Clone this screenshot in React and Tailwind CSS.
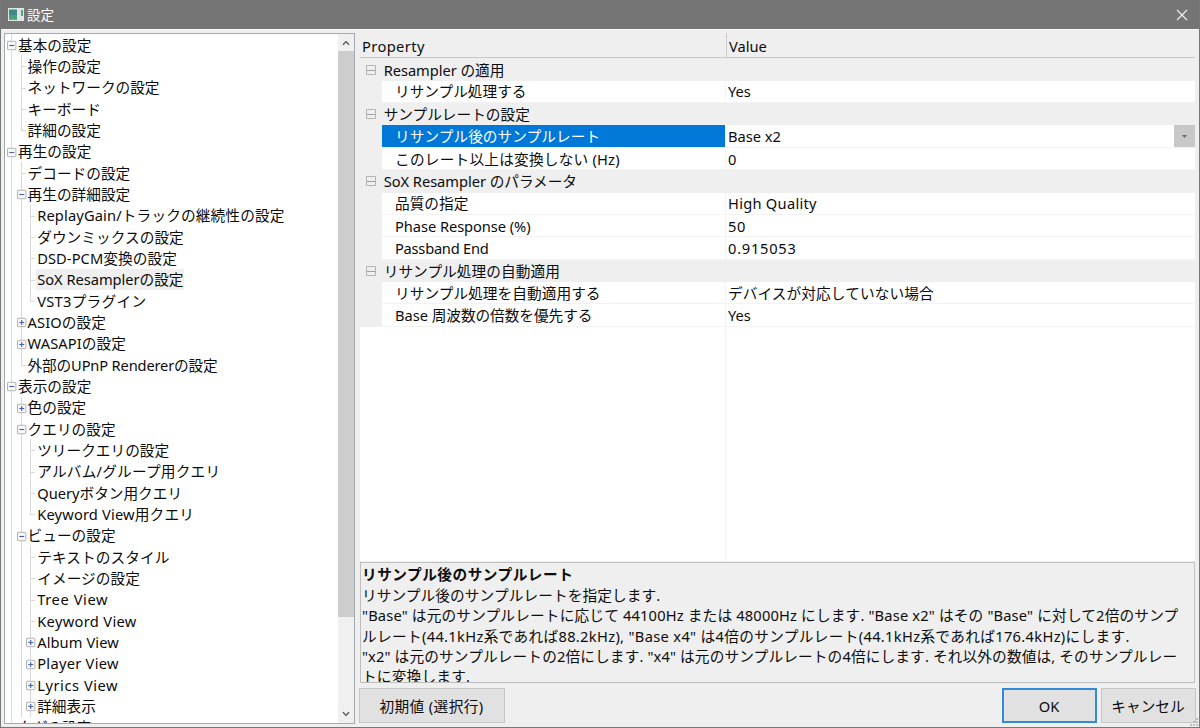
import React from "react";

// state is "open" or "closed" for rows with children, nothing for plain rows
const treeRows = [
  { depth: 0, label: "基本の設定", state: "open" },
  { depth: 1, label: "操作の設定" },
  { depth: 1, label: "ネットワークの設定" },
  { depth: 1, label: "キーボード" },
  { depth: 1, label: "詳細の設定", last: true },
  { depth: 0, label: "再生の設定", state: "open" },
  { depth: 1, label: "デコードの設定" },
  { depth: 1, label: "再生の詳細設定", state: "open" },
  { depth: 2, label: "ReplayGain/トラックの継続性の設定", spacing: "tracking-[0.14px]" },
  { depth: 2, label: "ダウンミックスの設定", spacing: "tracking-[0.05px]" },
  { depth: 2, label: "DSD-PCM変換の設定", spacing: "tracking-[0.08px]" },
  { depth: 2, label: "SoX Resamplerの設定", selected: true, spacing: "tracking-[-0.03px]" },
  { depth: 2, label: "VST3プラグイン", last: true, spacing: "tracking-[0.28px]" },
  { depth: 1, label: "ASIOの設定", state: "closed", spacing: "tracking-[0.08px]" },
  { depth: 1, label: "WASAPIの設定", state: "closed", spacing: "tracking-[0.08px]" },
  { depth: 1, label: "外部のUPnP Rendererの設定", last: true, spacing: "tracking-[-0.16px]" },
  { depth: 0, label: "表示の設定", state: "open" },
  { depth: 1, label: "色の設定", state: "closed" },
  { depth: 1, label: "クエリの設定", state: "open" },
  { depth: 2, label: "ツリークエリの設定" },
  { depth: 2, label: "アルバム/グループ用クエリ", spacing: "tracking-[0.22px]" },
  { depth: 2, label: "Queryボタン用クエリ" },
  { depth: 2, label: "Keyword View用クエリ", last: true, spacing: "tracking-[0.17px]" },
  { depth: 1, label: "ビューの設定", state: "open" },
  { depth: 2, label: "テキストのスタイル", spacing: "tracking-[0.08px]" },
  { depth: 2, label: "イメージの設定", spacing: "tracking-[0.08px]" },
  { depth: 2, label: "Tree View", spacing: "tracking-[0.6px]" },
  { depth: 2, label: "Keyword View", spacing: "tracking-[0.33px]" },
  { depth: 2, label: "Album View", state: "closed", spacing: "tracking-[0.08px]" },
  { depth: 2, label: "Player View", state: "closed", spacing: "tracking-[0.28px]" },
  { depth: 2, label: "Lyrics View", state: "closed", spacing: "tracking-[0.55px]" },
  { depth: 2, label: "詳細表示", state: "closed" },
  { depth: 0, label: "タグの設定", state: "open" },
];

const properties = [
  { group: "Resampler の適用", spacing: "tracking-[-0.05px]" },
  { name: "リサンプル処理する", value: "Yes" },
  { group: "サンプルレートの設定" },
  { name: "リサンプル後のサンプルレート", value: "Base x2", selected: true, spacing: "tracking-[0.06px]" },
  { name: "このレート以上は変換しない (Hz)", value: "0", spacing: "tracking-[0.22px]" },
  { group: "SoX Resampler のパラメータ", spacing: "tracking-[-0.04px]" },
  { name: "品質の指定", value: "High Quality", valueSpacing: "tracking-[0.27px]" },
  { name: "Phase Response (%)", value: "50", spacing: "tracking-[-0.06px]", valueSpacing: "tracking-[0.7px]" },
  { name: "Passband End", value: "0.915053", spacing: "tracking-[-0.25px]", valueSpacing: "tracking-[0.75px]" },
  { group: "リサンプル処理の自動適用", spacing: "tracking-[0.06px]" },
  { name: "リサンプル処理を自動適用する", value: "デバイスが対応していない場合", spacing: "tracking-[0.06px]", valueSpacing: "tracking-[0.1px]" },
  { name: "Base 周波数の倍数を優先する", value: "Yes", spacing: "tracking-[-0.04px]" },
];

const Line = () => (
  <svg width="9.6" height="21.34" className="shrink-0">
    <path d="M4.5 0V22" stroke="#d9d9d9" />
  </svg>
);

const Branch = ({ row }) => {
  const { state, last, depth } = row;
  return (
    <svg width="10" height="21.34" className="shrink-0">
      {depth === 0 ? (
        <path d="M4.5 0V22" stroke="#dedede" />
      ) : (
        <path d={last ? "M4.5 0V11.5" : "M4.5 0V22"} stroke="#d9d9d9" />
      )}
      {!state && <path d="M4.5 11.5H9" stroke="#d9d9d9" />}
      {state && (
        <>
          <rect x="0.5" y="7.3" width="8.4" height="8.4" rx="0.5" fill="#f8f8f8" stroke="#b4b4b4" />
          <path d="M2.3 11.5H7.2" stroke="#4a62ad" strokeWidth="1.1" />
          {state === "closed" && <path d="M4.7 9V14" stroke="#4a62ad" strokeWidth="1.1" />}
        </>
      )}
    </svg>
  );
};

const TreeRow = ({ row }) => (
  <div className="flex h-[21.34px] shrink-0 items-center">
    {row.depth > 0 && <Line />}
    {row.depth > 1 && <Line />}
    <Branch row={row} />
    <span
      className={`flex h-[21px] items-center whitespace-nowrap pr-[1px] pl-[1px] ${
        row.selected ? "bg-[#efefef]" : ""
      } ${row.spacing || ""}`}
    >
      {row.label}
    </span>
  </div>
);

const Tree = () => (
  <div className="flex h-[691px] w-[351px] border border-[#a5a9b0] bg-white">
    <div className="flex flex-1 flex-col overflow-hidden pl-[2px]">
      {treeRows.map((row) => (
        <TreeRow key={row.label} row={row} />
      ))}
    </div>
    <div className="flex w-4 shrink-0 flex-col bg-[#f0f0f0]">
      <div className="flex h-[17px] items-center justify-center">
        <svg width="8" height="6" fill="none">
          <path d="M1 4.8L4 1.6L7 4.8" stroke="#505050" strokeWidth="1.3" />
        </svg>
      </div>
      <div className="h-[566px] bg-[#cdcdcd]" />
      <div className="mt-auto flex h-[18px] items-center justify-center">
        <svg width="8" height="6" fill="none">
          <path d="M1 1.2L4 4.4L7 1.2" stroke="#505050" strokeWidth="1.3" />
        </svg>
      </div>
    </div>
  </div>
);

const PropertyRow = ({ item }) => {
  if (item.group) {
    return (
      <div className="flex h-[22.36px] items-center bg-[#efefef]">
        <svg width="23.7" height="12" fill="none" className="shrink-0">
          <path d="M6.5 1.5H15.5V10.5H6.5Z" stroke="#b4b4b4" />
          <path d="M7 6.5H15" stroke="#a0a0a0" />
        </svg>
        <span className={item.spacing}>{item.group}</span>
      </div>
    );
  }
  return (
    <div className="flex h-[22.36px]">
      <div className="w-[22px] shrink-0 bg-[#efefef]" />
      <div
        className={`flex w-[344px] shrink-0 items-center border-r border-b border-[#f3f3f3] pl-[13px] ${
          item.selected ? "bg-[#0078d7] text-white" : "bg-white"
        } ${item.spacing || ""}`}
      >
        {item.name}
      </div>
      <div className="flex flex-1 items-center border-b border-[#f3f3f3] bg-white pl-[2px]">
        <span className={item.valueSpacing}>{item.value}</span>
        {item.selected && (
          <div className="ml-auto flex h-full w-[21px] items-center justify-center bg-[#c8c8c8]">
            <svg width="5" height="3">
              <path d="M0 0H5L2.5 3Z" fill="#6b6b6b" />
            </svg>
          </div>
        )}
      </div>
    </div>
  );
};

const PropertyGrid = () => (
  <div className="flex h-[528px] flex-col bg-white">
    <div className="flex h-[25.4px] shrink-0 border-b border-[#c9c9c9] bg-[#efefef]">
      <div className="flex w-[367px] items-center border-r border-[#c9c9c9] pt-[2px] pl-[2px] tracking-[0.4px]">
        Property
      </div>
      <div className="flex items-center pt-[2px] pl-[2px]">Value</div>
    </div>
    {properties.map((item) => (
      <PropertyRow key={item.group || item.name} item={item} />
    ))}
    <div className="w-[366px] flex-1 border-r border-[#f3f3f3]" />
  </div>
);

const Description = () => (
  <div className="mt-[1px] h-[121px] overflow-hidden border border-[#bfbfbf] pt-[1px] pl-[1px] leading-[20.5px] whitespace-nowrap">
    <p className="font-bold tracking-[0.5px]">リサンプル後のサンプルレート</p>
    <p className="tracking-[0.1px]">リサンプル後のサンプルレートを指定します.</p>
    <p className="tracking-[0.17px]">
      "Base" は元のサンプルレートに応じて 44100Hz または 48000Hz にします. "Base x2" はその "Base" に対して2倍のサンプ
    </p>
    <p className="tracking-[0.33px]">
      ルレート(44.1kHz系であれば88.2kHz), "Base x4" は4倍のサンプルレート(44.1kHz系であれば176.4kHz)にします.
    </p>
    <p className="tracking-[0.14px]">
      "x2" は元のサンプルレートの2倍にします. "x4" は元のサンプルレートの4倍にします. それ以外の数値は, そのサンプルレー
    </p>
    <p className="-mt-[1px] tracking-[0.2px]">トに変換します.</p>
  </div>
);

const ResizeGrip = () => (
  <svg width="9" height="9" fill="#bdbdbd" className="absolute right-0 bottom-0">
    <path d="M6 0H8V2H6ZM6 3H8V5H6ZM6 6H8V8H6ZM3 3H5V5H3ZM3 6H5V8H3ZM0 6H2V8H0Z" />
  </svg>
);

const App = () => {
  return (
    <div className="relative flex h-[728px] w-[1200px] flex-col overflow-hidden border border-t-0 border-[#777777] bg-[#efefef] font-['Noto_Sans','Noto_Sans_CJK_JP',sans-serif] text-[14.67px] leading-[20px] text-[#0c0c0c]">
      <header className="flex h-[29px] shrink-0 items-center bg-[#757575] pl-[7px] text-white">
        <svg width="16" height="13" className="mr-[3px]">
          <rect width="16" height="13" fill="#dfe6e6" />
          <rect x="1" y="1.5" width="8" height="10" fill="#3f8a84" />
          <rect x="1" y="7" width="8" height="4.5" fill="#4f9f7c" />
          <rect x="13" y="2" width="2" height="6" fill="#58a080" />
        </svg>
        <span className="text-[13.5px]">設定</span>
        <svg width="12" height="12" className="mr-[11px] ml-auto" fill="none">
          <path d="M1 1L11 11M11 1L1 11" stroke="#f2f2f2" strokeWidth="1.1" />
        </svg>
      </header>
      <main className="flex flex-1 border-t border-[#fafafa] pt-[3px] pl-[3px]">
        <Tree />
        <section className="ml-[5px] flex w-[834.5px] flex-col">
          <PropertyGrid />
          <Description />
          <footer className="mt-[5px] -mr-[1px] -ml-[1px] flex h-[35px]">
            <button className="w-[146px] border border-[#c6c6c6] bg-[#e1e1e1] pr-[1px] tracking-[0.4px]">
              初期値 (選択行)
            </button>
            <button className="ml-auto w-[95px] border-2 border-[#3289d6] bg-[#e1e1e1]">OK</button>
            <button className="ml-[4px] w-[95px] border border-[#c6c6c6] bg-[#e1e1e1]">キャンセル</button>
          </footer>
        </section>
      </main>
      <ResizeGrip />
    </div>
  );
};

export default App;
